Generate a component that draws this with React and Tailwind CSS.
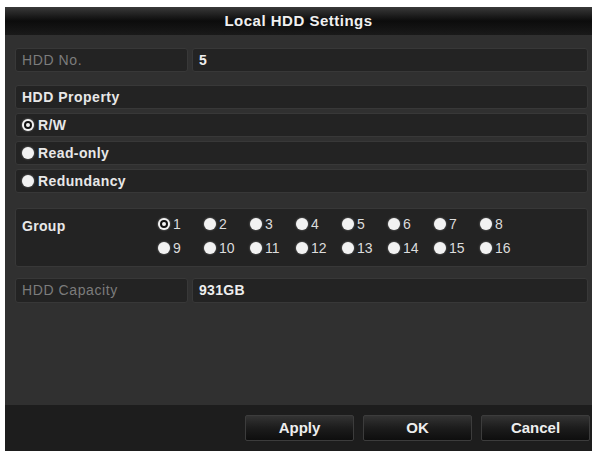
import React, { useState } from 'react';

const font = { fontFamily: '"Liberation Sans", Arial, sans-serif' };

const Radio = ({ checked }) => (
  <span className="relative inline-flex h-[12px] w-[12px] shrink-0 items-center justify-center rounded-full bg-[#f2f2f2] shadow-[0_0_2px_rgba(255,255,255,0.5)]">
    {checked && (
      <span className="flex h-[8px] w-[8px] items-center justify-center rounded-full bg-[#111]">
        <span className="h-[4px] w-[4px] rounded-full bg-[#f2f2f2]" />
      </span>
    )}
  </span>
);

const Cell = ({ children, className = '' }) => (
  <div className={`flex items-center rounded-[3px] border border-[#383838] bg-[#232323] px-[6px] ${className}`}>
    {children}
  </div>
);

const App = () => {
  const [property, setProperty] = useState('rw');
  const [group, setGroup] = useState(1);

  const properties = [
    { id: 'rw', label: 'R/W' },
    { id: 'ro', label: 'Read-only' },
    { id: 'red', label: 'Redundancy' },
  ];

  const groups = Array.from({ length: 16 }, (_, i) => i + 1);

  return (
    <div className="h-[451px] w-[598px] overflow-hidden bg-white pl-[5px] pr-[6px] pt-[7px]" style={font}>
      <div className="flex h-[444px] flex-col bg-[#303030]">
        {/* Title bar */}
        <div className="flex h-[28px] shrink-0 items-center justify-center bg-gradient-to-b from-[#3a3a3a] via-[#0c0c0c] to-[#1a1a1a] text-[15px] font-bold tracking-[0.5px] text-[#f0f0f0]">
          Local HDD Settings
        </div>

        {/* Body */}
        <div className="flex flex-1 flex-col pl-[10px] pr-[4px] pt-[13px] text-[14px]">
          <div className="flex h-[24px] gap-[4px]">
            <Cell className="w-[173px] tracking-[0.6px] text-[#7c7c7c]">HDD No.</Cell>
            <Cell className="flex-1 font-bold text-[#eee]">5</Cell>
          </div>

          <div className="mt-[13px] flex flex-col gap-[4px]">
            <Cell className="h-[24px] font-bold tracking-[0.5px] text-[#e8e8e8]">HDD Property</Cell>
            {properties.map((p) => (
              <Cell key={p.id} className="h-[24px] text-[#e8e8e8]">
                <button className="flex items-center gap-[4px]" onClick={() => setProperty(p.id)}>
                  <Radio checked={property === p.id} />
                  <span className="font-bold tracking-[0.4px]">{p.label}</span>
                </button>
              </Cell>
            ))}
          </div>

          <Cell className="mt-[15px] h-[59px] items-start pt-[7px] text-[#e8e8e8]">
            <span className="w-[136px] font-bold tracking-[0.3px]">Group</span>
            <div className="grid grid-cols-[repeat(8,46px)] gap-y-[10px] pt-[1px]">
              {groups.map((g) => (
                <button key={g} className="flex h-[14px] items-center gap-[3px]" onClick={() => setGroup(g)}>
                  <Radio checked={group === g} />
                  <span className="text-[#dcdcdc]">{g}</span>
                </button>
              ))}
            </div>
          </Cell>

          <div className="mt-[11px] flex h-[25px] gap-[4px]">
            <Cell className="w-[173px] tracking-[0.6px] text-[#7c7c7c]">HDD Capacity</Cell>
            <Cell className="flex-1 font-bold tracking-[0.3px] text-[#eee]">931GB</Cell>
          </div>
        </div>

        {/* Footer */}
        <div className="flex h-[46px] shrink-0 items-start justify-end gap-[9px] bg-[#1d1d1d] pr-[2px] pt-[10px]">
          {['Apply', 'OK', 'Cancel'].map((b) => (
            <button
              key={b}
              className="flex h-[26px] w-[109px] items-center justify-center rounded-[2px] border border-[#3c3c3c] bg-gradient-to-b from-[#333] via-[#1c1c1c] to-[#0e0e0e] text-[15px] font-bold text-[#eee]"
            >
              {b}
            </button>
          ))}
        </div>
      </div>
    </div>
  );
};

export default App;
